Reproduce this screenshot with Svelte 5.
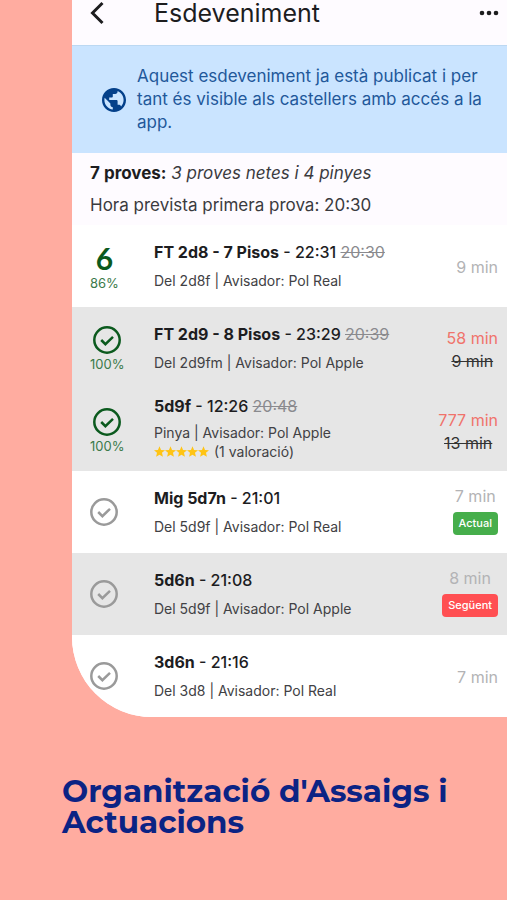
<script>
	const proves = [
		{ name: "FT 2d8 - 7 Pisos", time: "22:31", planned: "20:30", detail: "Del 2d8f | Avisador: Pol Real", count: 6, percent: 86, length: "9 min" },
		{ name: "FT 2d9 - 8 Pisos", time: "23:29", planned: "20:39", detail: "Del 2d9fm | Avisador: Pol Apple", percent: 100, length: "58 min", before: "9 min", shaded: true },
		{ name: "5d9f", time: "12:26", planned: "20:48", detail: "Pinya | Avisador: Pol Apple", percent: 100, stars: 5, votes: "(1 valoració)", length: "777 min", before: "13 min", shaded: true },
		{ name: "Mig 5d7n", time: "21:01", detail: "Del 5d9f | Avisador: Pol Real", length: "7 min", badge: "Actual", tone: "green" },
		{ name: "5d6n", time: "21:08", detail: "Del 5d9f | Avisador: Pol Apple", length: "8 min", badge: "Següent", tone: "red", shaded: true },
		{ name: "3d6n", time: "21:16", detail: "Del 3d8 | Avisador: Pol Real", length: "7 min" }
	];
</script>

<main>
	<div class="phone">
		<header>
			<button class="back" aria-label="Enrere">
				<svg width="16" height="26" viewBox="0 0 16 26">
					<path d="M13.5 3 3.5 13l10 10" fill="none" stroke="currentColor" stroke-width="3" />
				</svg>
			</button>
			<h1>Esdeveniment</h1>
			<button class="more" aria-label="Més opcions">
				<svg width="20" height="6" viewBox="0 0 20 6">
					<circle cx="3" cy="3" r="2.3" />
					<circle cx="10" cy="3" r="2.3" />
					<circle cx="17" cy="3" r="2.3" />
				</svg>
			</button>
		</header>

		<div class="notice">
			<svg class="globe" viewBox="2 2 20 20">
				<path d="M12 2C6.48 2 2 6.48 2 12s4.48 10 10 10 10-4.48 10-10S17.52 2 12 2zm-1 17.93c-3.95-.49-7-3.85-7-7.93 0-.62.08-1.21.21-1.79L9 15v1c0 1.1.9 2 2 2v1.93zm6.9-2.54c-.26-.81-1-1.39-1.9-1.39h-1v-3c0-.55-.45-1-1-1H8v-2h2c.55 0 1-.45 1-1V7h2c1.1 0 2-.9 2-2v-.41c2.93 1.19 5 4.06 5 7.41 0 2.08-.8 3.97-2.1 5.39z" />
			</svg>
			<p>Aquest esdeveniment ja està publicat i per tant és visible als castellers amb accés a la app.</p>
		</div>

		<div class="summary">
			<p><strong>7 proves:</strong> <em>3 proves netes i 4 pinyes</em></p>
			<p>Hora prevista primera prova: 20:30</p>
		</div>

		<ul>
			{#each proves as prova}
				<li class:shaded={prova.shaded}>
					<div class="status" class:done={prova.percent}>
						<div class="mark">
							{#if prova.count}
								<span class="count">{prova.count}</span>
							{:else}
								<svg width="28" height="28" viewBox="0 0 28 28">
									<circle cx="14" cy="14" r="12.7" />
									<path d="m8.2 14 4.2 4.2 7.6-7.4" />
								</svg>
							{/if}
							{#if prova.percent}
								<span class="percent">{prova.percent}%</span>
							{/if}
						</div>
					</div>
					<div class="info" class:rated={prova.stars}>
						<h2>
							<b>{prova.name}</b> - {prova.time}
							{#if prova.planned}<s>{prova.planned}</s>{/if}
						</h2>
						<p>{prova.detail}</p>
						{#if prova.stars}
							<p class="rating">
								{#each Array(prova.stars) as _}
									<svg width="11" height="11" viewBox="2 2 20 19">
										<path d="M12 17.27 18.18 21l-1.64-7.03L22 9.24l-7.19-.61L12 2 9.19 8.63 2 9.24l5.46 4.73L5.82 21z" />
									</svg>
								{/each}
								<span>{prova.votes}</span>
							</p>
						{/if}
					</div>
					<div class="length">
						<span class:late={prova.before}>{prova.length}</span>
						{#if prova.before}<s>{prova.before}</s>{/if}
						{#if prova.badge}<span class={`badge ${prova.tone}`}>{prova.badge}</span>{/if}
					</div>
				</li>
			{/each}
		</ul>
	</div>

	<h3>Organització d'Assaigs i Actuacions</h3>
</main>

<style>
	:global(body) {
		margin: 0;
		background: #ffaca0;
	}
	main {
		min-height: 100vh;
		box-sizing: border-box;
		padding-left: 72px;
		font-family: Inter, "Liberation Sans", sans-serif;
		color: #1d1d1f;
		background: #ffaca0;
	}
	h1,
	h2,
	h3,
	p,
	ul {
		margin: 0;
		padding: 0;
	}
	button {
		display: flex;
		padding: 0;
		border: 0;
		background: none;
		color: #1d1d1f;
	}
	.phone {
		overflow: hidden;
		background: #fefbff;
		border-bottom-left-radius: 80px;
	}
	header {
		display: flex;
		align-items: center;
		padding: 0 8px 19px 17px;
	}
	.back {
		width: 65px;
	}
	h1 {
		flex: 1;
		font-size: 25px;
		line-height: 26px;
		font-weight: 400;
	}
	.more {
		fill: currentColor;
	}
	.notice {
		display: flex;
		align-items: center;
		gap: 11px;
		padding: 19px 20px 19px 30px;
		border-top: 1px solid #bcd8f2;
		background: #cae4ff;
		color: #22589a;
		font-size: 17px;
		line-height: 23px;
	}
	.notice p {
		flex: 1;
	}
	.globe {
		width: 24px;
		height: 24px;
		flex: none;
		fill: #04408a;
	}
	.summary {
		padding: 4px 18px;
		font-size: 17px;
		line-height: 32px;
	}
	.summary p {
		color: #3a3a3e;
	}
	.summary strong {
		color: #1d1d1f;
	}
	ul {
		list-style: none;
		background: #fff;
	}
	li {
		display: flex;
		align-items: center;
		min-height: 82px;
		box-sizing: border-box;
		padding: 0 9px 0 18px;
	}
	.shaded {
		background: #e6e6e6;
	}
	.status {
		width: 64px;
		color: #9a9a9a;
	}
	.mark {
		display: inline-flex;
		flex-direction: column;
		align-items: center;
		vertical-align: middle;
	}
	.mark svg {
		fill: none;
		stroke: currentColor;
		stroke-width: 2.5;
	}
	.done {
		padding-top: 4px;
		color: #0b5a1e;
	}
	.count {
		font-family: Lato, Inter, sans-serif;
		font-size: 30px;
		line-height: 30px;
		font-weight: 700;
	}
	.percent {
		font-size: 13px;
		line-height: 20px;
		color: #3b7a4a;
	}
	.info {
		flex: 1;
		padding-bottom: 2px;
	}
	h2 {
		margin-bottom: 7px;
		font-size: 16px;
		line-height: 24px;
		font-weight: 500;
	}
	h2 b {
		font-weight: 700;
	}
	h2 s {
		color: #8a8a8e;
		font-weight: 400;
	}
	.info p {
		font-size: 14px;
		line-height: 19px;
		color: #414144;
	}
	.rated {
		padding-bottom: 5px;
	}
	.rated h2 {
		margin-bottom: 5px;
	}
	.rating {
		display: flex;
		align-items: center;
	}
	.rating svg {
		fill: #ffc414;
	}
	.rating span {
		margin-left: 5px;
	}
	.length {
		display: flex;
		flex-direction: column;
		align-items: center;
		padding-top: 3px;
		font-size: 16px;
		line-height: 23px;
		color: #b3b3b5;
	}
	.length s {
		color: #333;
	}
	.length .late {
		color: #f0736b;
	}
	.badge {
		margin: 4px 0 7px;
		padding: 0 6px;
		border-radius: 4px;
		color: #fff;
		font-size: 11px;
		font-weight: 500;
	}
	.green {
		background: #46ae4b;
	}
	.red {
		background: #ff4f52;
	}
	h3 {
		margin: 59px 40px 0 -10px;
		font-family: Montserrat, Inter, sans-serif;
		font-size: 31px;
		line-height: 31px;
		font-weight: 700;
		color: #0b2384;
	}
</style>
